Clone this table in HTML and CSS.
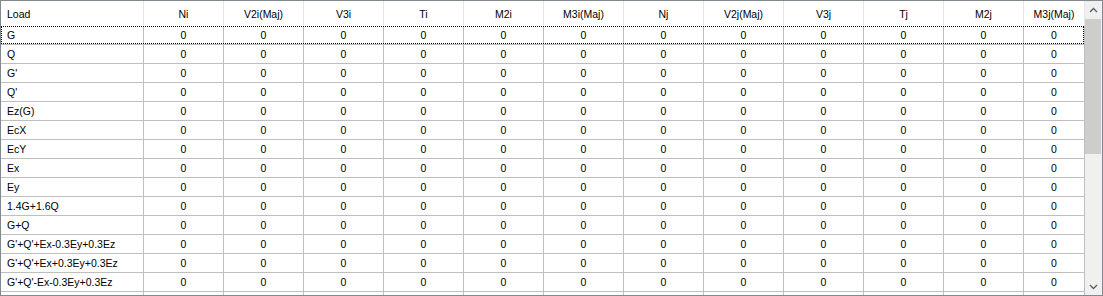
FILE: index.html
```html
<!DOCTYPE html>
<html>
<head>
<meta charset="utf-8">
<link rel="stylesheet" href="styles.css">
</head>
<body>
<div class="grid-view">
  <div class="table-area">
    <div class="row header">
      <div class="cell left">Load</div>
      <div class="cell">Ni</div>
      <div class="cell">V2i(Maj)</div>
      <div class="cell">V3i</div>
      <div class="cell">Ti</div>
      <div class="cell">M2i</div>
      <div class="cell">M3i(Maj)</div>
      <div class="cell">Nj</div>
      <div class="cell">V2j(Maj)</div>
      <div class="cell">V3j</div>
      <div class="cell">Tj</div>
      <div class="cell">M2j</div>
      <div class="cell">M3j(Maj)</div>
    </div>
    <div class="row body focused"><div class="cell left">G</div><div class="cell">0</div><div class="cell">0</div><div class="cell">0</div><div class="cell">0</div><div class="cell">0</div><div class="cell">0</div><div class="cell">0</div><div class="cell">0</div><div class="cell">0</div><div class="cell">0</div><div class="cell">0</div><div class="cell">0</div></div>
    <div class="row body"><div class="cell left">Q</div><div class="cell">0</div><div class="cell">0</div><div class="cell">0</div><div class="cell">0</div><div class="cell">0</div><div class="cell">0</div><div class="cell">0</div><div class="cell">0</div><div class="cell">0</div><div class="cell">0</div><div class="cell">0</div><div class="cell">0</div></div>
    <div class="row body"><div class="cell left">G'</div><div class="cell">0</div><div class="cell">0</div><div class="cell">0</div><div class="cell">0</div><div class="cell">0</div><div class="cell">0</div><div class="cell">0</div><div class="cell">0</div><div class="cell">0</div><div class="cell">0</div><div class="cell">0</div><div class="cell">0</div></div>
    <div class="row body"><div class="cell left">Q'</div><div class="cell">0</div><div class="cell">0</div><div class="cell">0</div><div class="cell">0</div><div class="cell">0</div><div class="cell">0</div><div class="cell">0</div><div class="cell">0</div><div class="cell">0</div><div class="cell">0</div><div class="cell">0</div><div class="cell">0</div></div>
    <div class="row body"><div class="cell left">Ez(G)</div><div class="cell">0</div><div class="cell">0</div><div class="cell">0</div><div class="cell">0</div><div class="cell">0</div><div class="cell">0</div><div class="cell">0</div><div class="cell">0</div><div class="cell">0</div><div class="cell">0</div><div class="cell">0</div><div class="cell">0</div></div>
    <div class="row body"><div class="cell left">EcX</div><div class="cell">0</div><div class="cell">0</div><div class="cell">0</div><div class="cell">0</div><div class="cell">0</div><div class="cell">0</div><div class="cell">0</div><div class="cell">0</div><div class="cell">0</div><div class="cell">0</div><div class="cell">0</div><div class="cell">0</div></div>
    <div class="row body"><div class="cell left">EcY</div><div class="cell">0</div><div class="cell">0</div><div class="cell">0</div><div class="cell">0</div><div class="cell">0</div><div class="cell">0</div><div class="cell">0</div><div class="cell">0</div><div class="cell">0</div><div class="cell">0</div><div class="cell">0</div><div class="cell">0</div></div>
    <div class="row body"><div class="cell left">Ex</div><div class="cell">0</div><div class="cell">0</div><div class="cell">0</div><div class="cell">0</div><div class="cell">0</div><div class="cell">0</div><div class="cell">0</div><div class="cell">0</div><div class="cell">0</div><div class="cell">0</div><div class="cell">0</div><div class="cell">0</div></div>
    <div class="row body"><div class="cell left">Ey</div><div class="cell">0</div><div class="cell">0</div><div class="cell">0</div><div class="cell">0</div><div class="cell">0</div><div class="cell">0</div><div class="cell">0</div><div class="cell">0</div><div class="cell">0</div><div class="cell">0</div><div class="cell">0</div><div class="cell">0</div></div>
    <div class="row body"><div class="cell left">1.4G+1.6Q</div><div class="cell">0</div><div class="cell">0</div><div class="cell">0</div><div class="cell">0</div><div class="cell">0</div><div class="cell">0</div><div class="cell">0</div><div class="cell">0</div><div class="cell">0</div><div class="cell">0</div><div class="cell">0</div><div class="cell">0</div></div>
    <div class="row body"><div class="cell left">G+Q</div><div class="cell">0</div><div class="cell">0</div><div class="cell">0</div><div class="cell">0</div><div class="cell">0</div><div class="cell">0</div><div class="cell">0</div><div class="cell">0</div><div class="cell">0</div><div class="cell">0</div><div class="cell">0</div><div class="cell">0</div></div>
    <div class="row body"><div class="cell left">G'+Q'+Ex-0.3Ey+0.3Ez</div><div class="cell">0</div><div class="cell">0</div><div class="cell">0</div><div class="cell">0</div><div class="cell">0</div><div class="cell">0</div><div class="cell">0</div><div class="cell">0</div><div class="cell">0</div><div class="cell">0</div><div class="cell">0</div><div class="cell">0</div></div>
    <div class="row body"><div class="cell left">G'+Q'+Ex+0.3Ey+0.3Ez</div><div class="cell">0</div><div class="cell">0</div><div class="cell">0</div><div class="cell">0</div><div class="cell">0</div><div class="cell">0</div><div class="cell">0</div><div class="cell">0</div><div class="cell">0</div><div class="cell">0</div><div class="cell">0</div><div class="cell">0</div></div>
    <div class="row body"><div class="cell left">G'+Q'-Ex-0.3Ey+0.3Ez</div><div class="cell">0</div><div class="cell">0</div><div class="cell">0</div><div class="cell">0</div><div class="cell">0</div><div class="cell">0</div><div class="cell">0</div><div class="cell">0</div><div class="cell">0</div><div class="cell">0</div><div class="cell">0</div><div class="cell">0</div></div>
    <div class="row body"><div class="cell left"></div><div class="cell"></div><div class="cell"></div><div class="cell"></div><div class="cell"></div><div class="cell"></div><div class="cell"></div><div class="cell"></div><div class="cell"></div><div class="cell"></div><div class="cell"></div><div class="cell"></div><div class="cell"></div></div>
  </div>
  <div class="scrollbar">
    <div class="sb-btn">
      <svg width="9" height="6" viewBox="0 0 9 6"><path d="M1 5 L4.5 1.5 L8 5" fill="none" stroke="#606060" stroke-width="1.4"/></svg>
    </div>
    <div class="sb-thumb"></div>
    <div class="sb-btn sb-down">
      <svg width="9" height="6" viewBox="0 0 9 6"><path d="M1 1 L4.5 4.5 L8 1" fill="none" stroke="#606060" stroke-width="1.4"/></svg>
    </div>
  </div>
</div>
</body>
</html>
```

FILE: styles.css
```css
html, body {
  margin: 0;
  padding: 0;
  background: #ffffff;
}

.grid-view {
  width: 1103px;
  height: 296px;
  box-sizing: border-box;
  border: 1px solid #828790;
  display: flex;
  overflow: hidden;
  font-family: "Liberation Sans", Arial, sans-serif;
  font-size: 10.5px;
  color: #000;
}

.table-area {
  flex: 1;
  display: flex;
  flex-direction: column;
  overflow: hidden;
  background: #fff;
}

.row {
  display: grid;
  grid-template-columns: 143px repeat(11, 80px) 61px;
  flex: none;
  position: relative;
}

.cell {
  box-sizing: border-box;
  display: flex;
  align-items: center;
  justify-content: center;
  white-space: nowrap;
  overflow: hidden;
}

.cell.left {
  justify-content: flex-start;
  padding-left: 6px;
}

.header .cell {
  height: 25px;
  border-right: 1px solid #e5e5e5;
}

.body .cell {
  height: 19px;
  border-right: 1px solid #bfbfbf;
  border-bottom: 1px solid #bfbfbf;
}

.focused::after {
  content: "";
  position: absolute;
  left: 0;
  top: 0;
  right: 1px;
  bottom: 1px;
  border: 1px dotted #000;
  pointer-events: none;
}

.scrollbar {
  width: 17px;
  flex: none;
  background: #f0f0f0;
  display: flex;
  flex-direction: column;
}

.sb-btn {
  height: 17px;
  display: flex;
  align-items: center;
  justify-content: center;
  flex: none;
}

.sb-down {
  margin-top: auto;
}

.sb-thumb {
  margin-top: 1px;
  height: 135px;
  width: 16px;
  background: #cdcdcd;
}
```
